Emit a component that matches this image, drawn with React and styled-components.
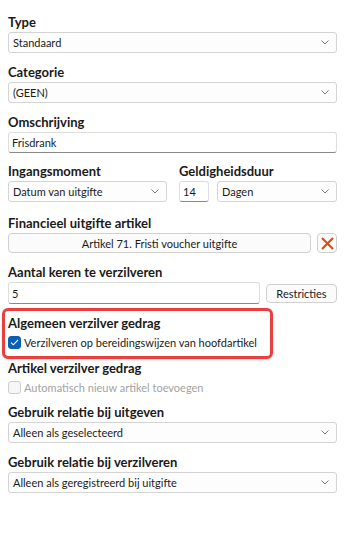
import React from "react";
import styled, { createGlobalStyle } from "styled-components";

const Global = createGlobalStyle`
  html, body { margin: 0; padding: 0; background: #ffffff; }
  body { font-family: "Lato", "Open Sans", sans-serif; color: #1b1b1b; }
  * { box-sizing: border-box; }
`;

const Page = styled.div`
  width: 348px;
  padding: 13px 11px 20px 8px;
  display: flex;
  flex-direction: column;
`;

const Field = styled.div`
  display: flex;
  flex-direction: column;
  margin-top: ${(p) => p.$mt ?? 10}px;
`;

const Label = styled.div`
  font-size: 13px;
  font-weight: 700;
  line-height: 18px;
  height: 18px;
  margin-bottom: 1px;
  color: #1a1a1a;
  white-space: nowrap;
`;

const Row = styled.div`
  display: flex;
  align-items: ${(p) => p.$align ?? "center"};
  gap: ${(p) => p.$gap ?? 8}px;
  margin-top: ${(p) => p.$mt ?? 0}px;
`;

const Column = styled.div`
  display: flex;
  flex-direction: column;
  flex: ${(p) => (p.$w ? `0 0 ${p.$w}px` : "1 1 auto")};
`;

const SelectBox = styled.div`
  flex: ${(p) => (p.$w ? `0 0 ${p.$w}px` : "1 1 auto")};
  height: 21px;
  display: flex;
  align-items: center;
  justify-content: space-between;
  padding: 0 7px 0 4px;
  border: 1px solid #d4d4d4;
  border-radius: 3px;
  background: #fdfdfd;
  font-size: 11px;
  color: #1b1b1b;
  white-space: nowrap;
`;

const TextBox = styled.div`
  flex: ${(p) => (p.$w ? `0 0 ${p.$w}px` : "1 1 auto")};
  height: ${(p) => p.$h ?? 21}px;
  display: flex;
  align-items: center;
  padding: 0 3px;
  border: 1px solid #dedede;
  border-bottom-color: #8a8a8a;
  border-radius: 3px;
  background: #ffffff;
  font-size: 11px;
  color: #1b1b1b;
`;

const Button = styled.div`
  flex: ${(p) => (p.$w ? `0 0 ${p.$w}px` : "1 1 auto")};
  height: ${(p) => p.$h ?? 20}px;
  display: flex;
  align-items: center;
  justify-content: center;
  border: 1px solid #d0d0d0;
  border-radius: 4px;
  background: #fbfbfb;
  font-size: 11px;
  color: #1b1b1b;
  white-space: nowrap;
`;

const Highlight = styled.div`
  margin: 4px 0 0 -6px;
  width: 271px;
  border: 3px solid #e8403f;
  border-radius: 6px;
  padding: 3px 3px 4px 3px;
  box-shadow: 0 1px 2px rgba(0, 0, 0, 0.15);
  display: flex;
  flex-direction: column;
`;

const CheckRow = styled.div`
  display: flex;
  align-items: center;
  gap: 3px;
  height: 19px;
  font-size: 11px;
  color: ${(p) => (p.$disabled ? "#a3a3a3" : "#1b1b1b")};
  white-space: nowrap;
`;

const Box = styled.span`
  width: 13px;
  height: 13px;
  border-radius: 3px;
  flex: 0 0 13px;
  display: inline-flex;
  align-items: center;
  justify-content: center;
  background: ${(p) => (p.$checked ? "#0a5fb4" : "#f6f6f6")};
  border: 1px solid ${(p) => (p.$checked ? "#0a5fb4" : "#cdcdcd")};
`;

const Chevron = () => (
  <svg width="8" height="5" viewBox="0 0 8 5" fill="none">
    <path d="M0.5 0.5 L4 4 L7.5 0.5" stroke="#7a7a7a" strokeWidth="1" />
  </svg>
);

const Check = () => (
  <svg width="9" height="7" viewBox="0 0 9 7" fill="none">
    <path d="M1 3.6 L3.3 5.8 L8 1" stroke="#ffffff" strokeWidth="1.1" />
  </svg>
);

const CloseIcon = () => (
  <svg width="13" height="13" viewBox="0 0 13 13" fill="none">
    <path d="M1 1 L12 12 M12 1 L1 12" stroke="#d4521a" strokeWidth="2.2" />
  </svg>
);

const Select = ({ value, w }) => (
  <SelectBox $w={w}>
    <span>{value}</span>
    <Chevron />
  </SelectBox>
);

export default function App() {
  return (
    <>
      <Global />
      <Page>
        <Field $mt={0}>
          <Label>Type</Label>
          <Select value="Standaard" />
        </Field>
        <Field>
          <Label>Categorie</Label>
          <Select value="(GEEN)" />
        </Field>
        <Field>
          <Label>Omschrijving</Label>
          <TextBox>Frisdrank</TextBox>
        </Field>
        <Row $gap={12} $align="flex-start" $mt={9}>
          <Column $w={159}>
            <Label>Ingangsmoment</Label>
            <Select value="Datum van uitgifte" />
          </Column>
          <Column>
            <Label>Geldigheidsduur</Label>
            <Row $gap={8}>
              <TextBox $w={30}>14</TextBox>
              <Select value="Dagen" />
            </Row>
          </Column>
        </Row>
        <Field $mt={12}>
          <Label>Financieel uitgifte artikel</Label>
          <Row $gap={6}>
            <Button>Artikel 71. Fristi voucher uitgifte</Button>
            <Button $w={20}>
              <CloseIcon />
            </Button>
          </Row>
        </Field>
        <Field>
          <Label>Aantal keren te verzilveren</Label>
          <Row $gap={6}>
            <TextBox $h={22}>5</TextBox>
            <Button $w={71} $h={19}>
              Restricties
            </Button>
          </Row>
        </Field>
        <Highlight>
          <Label>Algemeen verzilver gedrag</Label>
          <CheckRow>
            <Box $checked>
              <Check />
            </Box>
            Verzilveren op bereidingswijzen van hoofdartikel
          </CheckRow>
        </Highlight>
        <Field $mt={0}>
          <Label>Artikel verzilver gedrag</Label>
          <CheckRow $disabled>
            <Box />
            Automatisch nieuw artikel toevoegen
          </CheckRow>
        </Field>
        <Field $mt={6}>
          <Label>Gebruik relatie bij uitgeven</Label>
          <Select value="Alleen als geselecteerd" />
        </Field>
        <Field $mt={10}>
          <Label>Gebruik relatie bij verzilveren</Label>
          <Select value="Alleen als geregistreerd bij uitgifte" />
        </Field>
      </Page>
    </>
  );
}
